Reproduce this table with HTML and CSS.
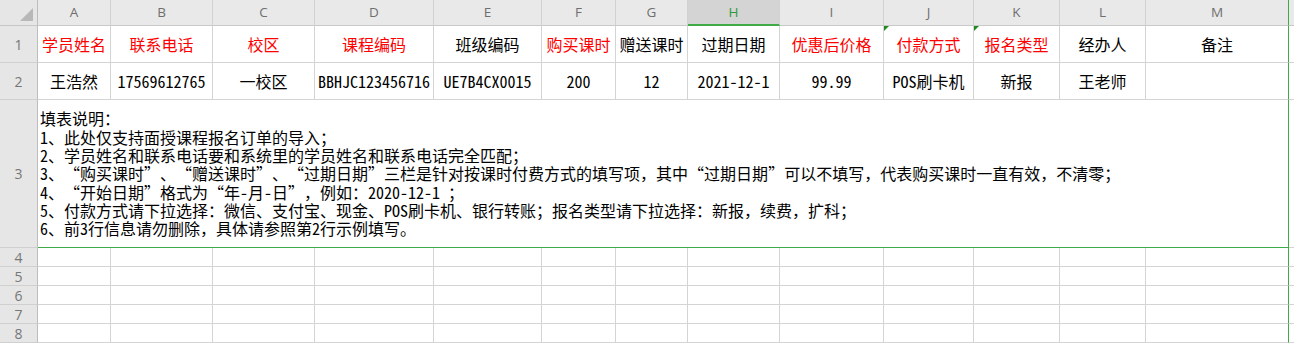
FILE: index.html
```html
<!DOCTYPE html>
<html lang="zh-CN">
<head>
<meta charset="utf-8">
<title>报名订单导入模板</title>
<link rel="stylesheet" href="styles.css">
</head>
<body>
<div class="sheet">
  <div class="corner"><span class="select-all"></span></div>
  <div class="ch">A</div>
  <div class="ch">B</div>
  <div class="ch">C</div>
  <div class="ch">D</div>
  <div class="ch">E</div>
  <div class="ch">F</div>
  <div class="ch">G</div>
  <div class="ch active">H</div>
  <div class="ch">I</div>
  <div class="ch">J</div>
  <div class="ch">K</div>
  <div class="ch">L</div>
  <div class="ch last">M</div>
  <div class="ch fill"></div>

  <div class="rh">1</div>
  <div class="c red">学员姓名</div>
  <div class="c red">联系电话</div>
  <div class="c red">校区</div>
  <div class="c red">课程编码</div>
  <div class="c">班级编码</div>
  <div class="c red">购买课时</div>
  <div class="c">赠送课时</div>
  <div class="c">过期日期</div>
  <div class="c red">优惠后价格</div>
  <div class="c red flag">付款方式</div>
  <div class="c red flag">报名类型</div>
  <div class="c">经办人</div>
  <div class="c last">备注</div>
  <div class="c fill"></div>

  <div class="rh">2</div>
  <div class="c">王浩然</div>
  <div class="c">17569612765</div>
  <div class="c">一校区</div>
  <div class="c">BBHJC123456716</div>
  <div class="c">UE7B4CX0015</div>
  <div class="c">200</div>
  <div class="c">12</div>
  <div class="c">2021-12-1</div>
  <div class="c">99.99</div>
  <div class="c">POS刷卡机</div>
  <div class="c">新报</div>
  <div class="c">王老师</div>
  <div class="c last"></div>
  <div class="c fill"></div>

  <div class="rh">3</div>
  <div class="c notes last">
    <div>填表说明：</div>
    <div>1、此处仅支持面授课程报名订单的导入；</div>
    <div>2、学员姓名和联系电话要和系统里的学员姓名和联系电话完全匹配；</div>
    <div>3、<span class="q">“</span>购买课时<span class="q">”</span>、<span class="q">“</span>赠送课时<span class="q">”</span>、<span class="q">“</span>过期日期<span class="q">”</span>三栏是针对按课时付费方式的填写项，其中<span class="q">“</span>过期日期<span class="q">”</span>可以不填写，代表购买课时一直有效，不清零；</div>
    <div>4、<span class="q">“</span>开始日期<span class="q">”</span>格式为<span class="q">“</span>年-月-日<span class="q">”</span>，例如：2020-12-1 ；</div>
    <div>5、付款方式请下拉选择：微信、支付宝、现金、POS刷卡机、银行转账；报名类型请下拉选择：新报，续费，扩科；</div>
    <div>6、前3行信息请勿删除，具体请参照第2行示例填写。</div>
  </div>
  <div class="c fill"></div>

  <div class="rh">4</div>
  <div class="c"></div><div class="c"></div><div class="c"></div><div class="c"></div><div class="c"></div><div class="c"></div><div class="c"></div><div class="c"></div><div class="c"></div><div class="c"></div><div class="c"></div><div class="c"></div><div class="c last"></div><div class="c fill"></div>
  <div class="rh">5</div>
  <div class="c"></div><div class="c"></div><div class="c"></div><div class="c"></div><div class="c"></div><div class="c"></div><div class="c"></div><div class="c"></div><div class="c"></div><div class="c"></div><div class="c"></div><div class="c"></div><div class="c last"></div><div class="c fill"></div>
  <div class="rh">6</div>
  <div class="c"></div><div class="c"></div><div class="c"></div><div class="c"></div><div class="c"></div><div class="c"></div><div class="c"></div><div class="c"></div><div class="c"></div><div class="c"></div><div class="c"></div><div class="c"></div><div class="c last"></div><div class="c fill"></div>
  <div class="rh">7</div>
  <div class="c"></div><div class="c"></div><div class="c"></div><div class="c"></div><div class="c"></div><div class="c"></div><div class="c"></div><div class="c"></div><div class="c"></div><div class="c"></div><div class="c"></div><div class="c"></div><div class="c last"></div><div class="c fill"></div>
  <div class="rh">8</div>
  <div class="c"></div><div class="c"></div><div class="c"></div><div class="c"></div><div class="c"></div><div class="c"></div><div class="c"></div><div class="c"></div><div class="c"></div><div class="c"></div><div class="c"></div><div class="c"></div><div class="c last"></div><div class="c fill"></div>
</div>
</body>
</html>
```

FILE: styles.css
```css
html, body {
  margin: 0;
  padding: 0;
  background: #ffffff;
  overflow: hidden;
}

.sheet {
  display: grid;
  grid-template-columns: 38px 73px 102px 102px 119px 108px 74px 72px 92px 104px 90px 86px 86px 143px 5px;
  grid-template-rows: 26px 37px 37px 148px 19px 19px 19px 19px 19px;
  width: 1294px;
  height: 343px;
  font-family: "Noto Sans Mono CJK SC", "Noto Sans CJK SC", monospace;
  color: #000;
}

.sheet > div {
  box-sizing: border-box;
  min-width: 0;
  overflow: hidden;
}

/* column headers */
.corner {
  position: relative;
  background: #e6e6e6;
  border-right: 1px solid #bdbdbd;
  border-bottom: 1px solid #c6c6c6;
}
.select-all {
  position: absolute;
  right: 4px;
  bottom: 4px;
  width: 0;
  height: 0;
  border-left: 13px solid transparent;
  border-bottom: 13px solid #b8b8b8;
}

.ch {
  background: #e9e9e9;
  border-right: 1px solid #d2d2d2;
  border-bottom: 1px solid #c9c9c9;
  display: flex;
  align-items: center;
  justify-content: center;
  font-family: "Open Sans", "Noto Sans", sans-serif;
  font-size: 13.5px;
  color: #6f6f6f;
  padding-bottom: 1px;
}
.ch.active {
  background: #d4d4d4;
  color: #2e9a3a;
  border-bottom: 2px solid #3faa48;
}
.ch.last {
  border-right: 1px solid #3faa48;
}
.ch.fill {
  border-right: none;
}

/* row headers */
.rh {
  background: #e6e6e6;
  border-right: 1px solid #bdbdbd;
  border-bottom: 1px solid #d0d0d0;
  display: flex;
  align-items: center;
  justify-content: center;
  font-family: "Open Sans", "Noto Sans", sans-serif;
  font-size: 14px;
  color: #777777;
}

/* cells */
.c {
  position: relative;
  border-right: 1px solid #d4d4d4;
  border-bottom: 1px solid #d4d4d4;
  display: flex;
  align-items: center;
  justify-content: center;
  font-size: 16px;
  white-space: nowrap;
}
.c.last {
  border-right: 1px solid #3faa48;
}
.c.fill {
  border-right: none;
}
.red {
  color: #ff0000;
}
.flag::before {
  content: "";
  position: absolute;
  left: 0;
  top: 0;
  width: 0;
  height: 0;
  border-top: 5px solid #1f8a1f;
  border-right: 5px solid transparent;
}

.notes {
  grid-column: 2 / 15;
  display: flex;
  flex-direction: column;
  align-items: flex-start;
  justify-content: center;
  padding-left: 2px;
  font-size: 16px;
  line-height: 18.3px;
  border-bottom: 1px solid #3faa48;
}
.q {
  font-family: "Noto Sans CJK SC", sans-serif;
  display: inline-block;
  width: 1em;
}
.notes .q:nth-child(odd) {
  text-align: right;
}
```
